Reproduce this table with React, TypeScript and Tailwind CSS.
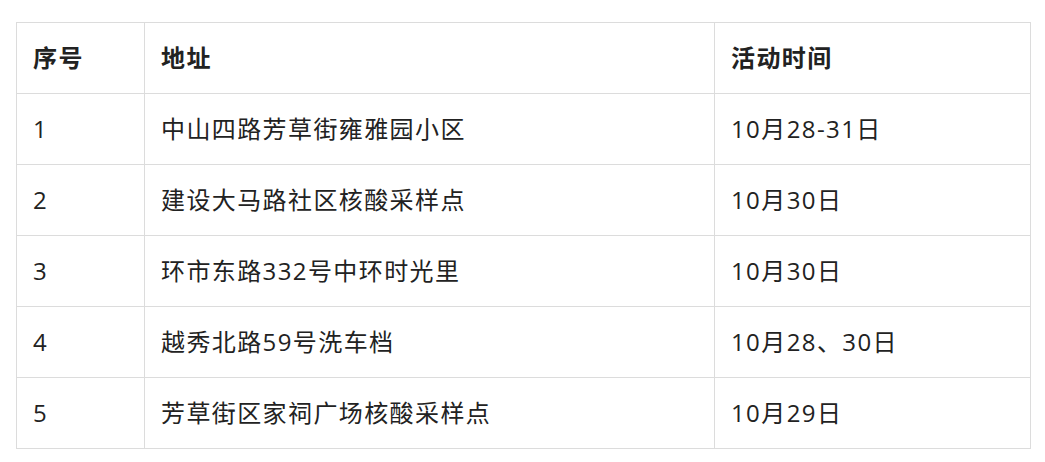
const rows = [
  ["1", "中山四路芳草街雍雅园小区", "10月28-31日"],
  ["2", "建设大马路社区核酸采样点", "10月30日"],
  ["3", "环市东路332号中环时光里", "10月30日"],
  ["4", "越秀北路59号洗车档", "10月28、30日"],
  ["5", "芳草街区家祠广场核酸采样点", "10月29日"],
]

export default function App() {
  return (
    <div
      className="bg-white pt-[22px] px-4 text-[#222]"
      style={{ fontFamily: '"Open Sans", "Noto Sans CJK SC", sans-serif' }}
    >
      <table className="w-[1015px] border-collapse text-[24px] tracking-[1.4px]">
        <thead>
          <tr className="h-[71px]">
            <th className="w-[128px] border border-[#dcdcdc] px-4 text-left font-bold">序号</th>
            <th className="w-[570px] border border-[#dcdcdc] px-4 text-left font-bold">地址</th>
            <th className="border border-[#dcdcdc] px-4 text-left font-bold">活动时间</th>
          </tr>
        </thead>
        <tbody>
          {rows.map((r) => (
            <tr key={r[0]} className="h-[71px]">
              <td className="border border-[#dcdcdc] px-4">{r[0]}</td>
              <td className="border border-[#dcdcdc] px-4">{r[1]}</td>
              <td className="border border-[#dcdcdc] px-4">{r[2]}</td>
            </tr>
          ))}
        </tbody>
      </table>
    </div>
  )
}
